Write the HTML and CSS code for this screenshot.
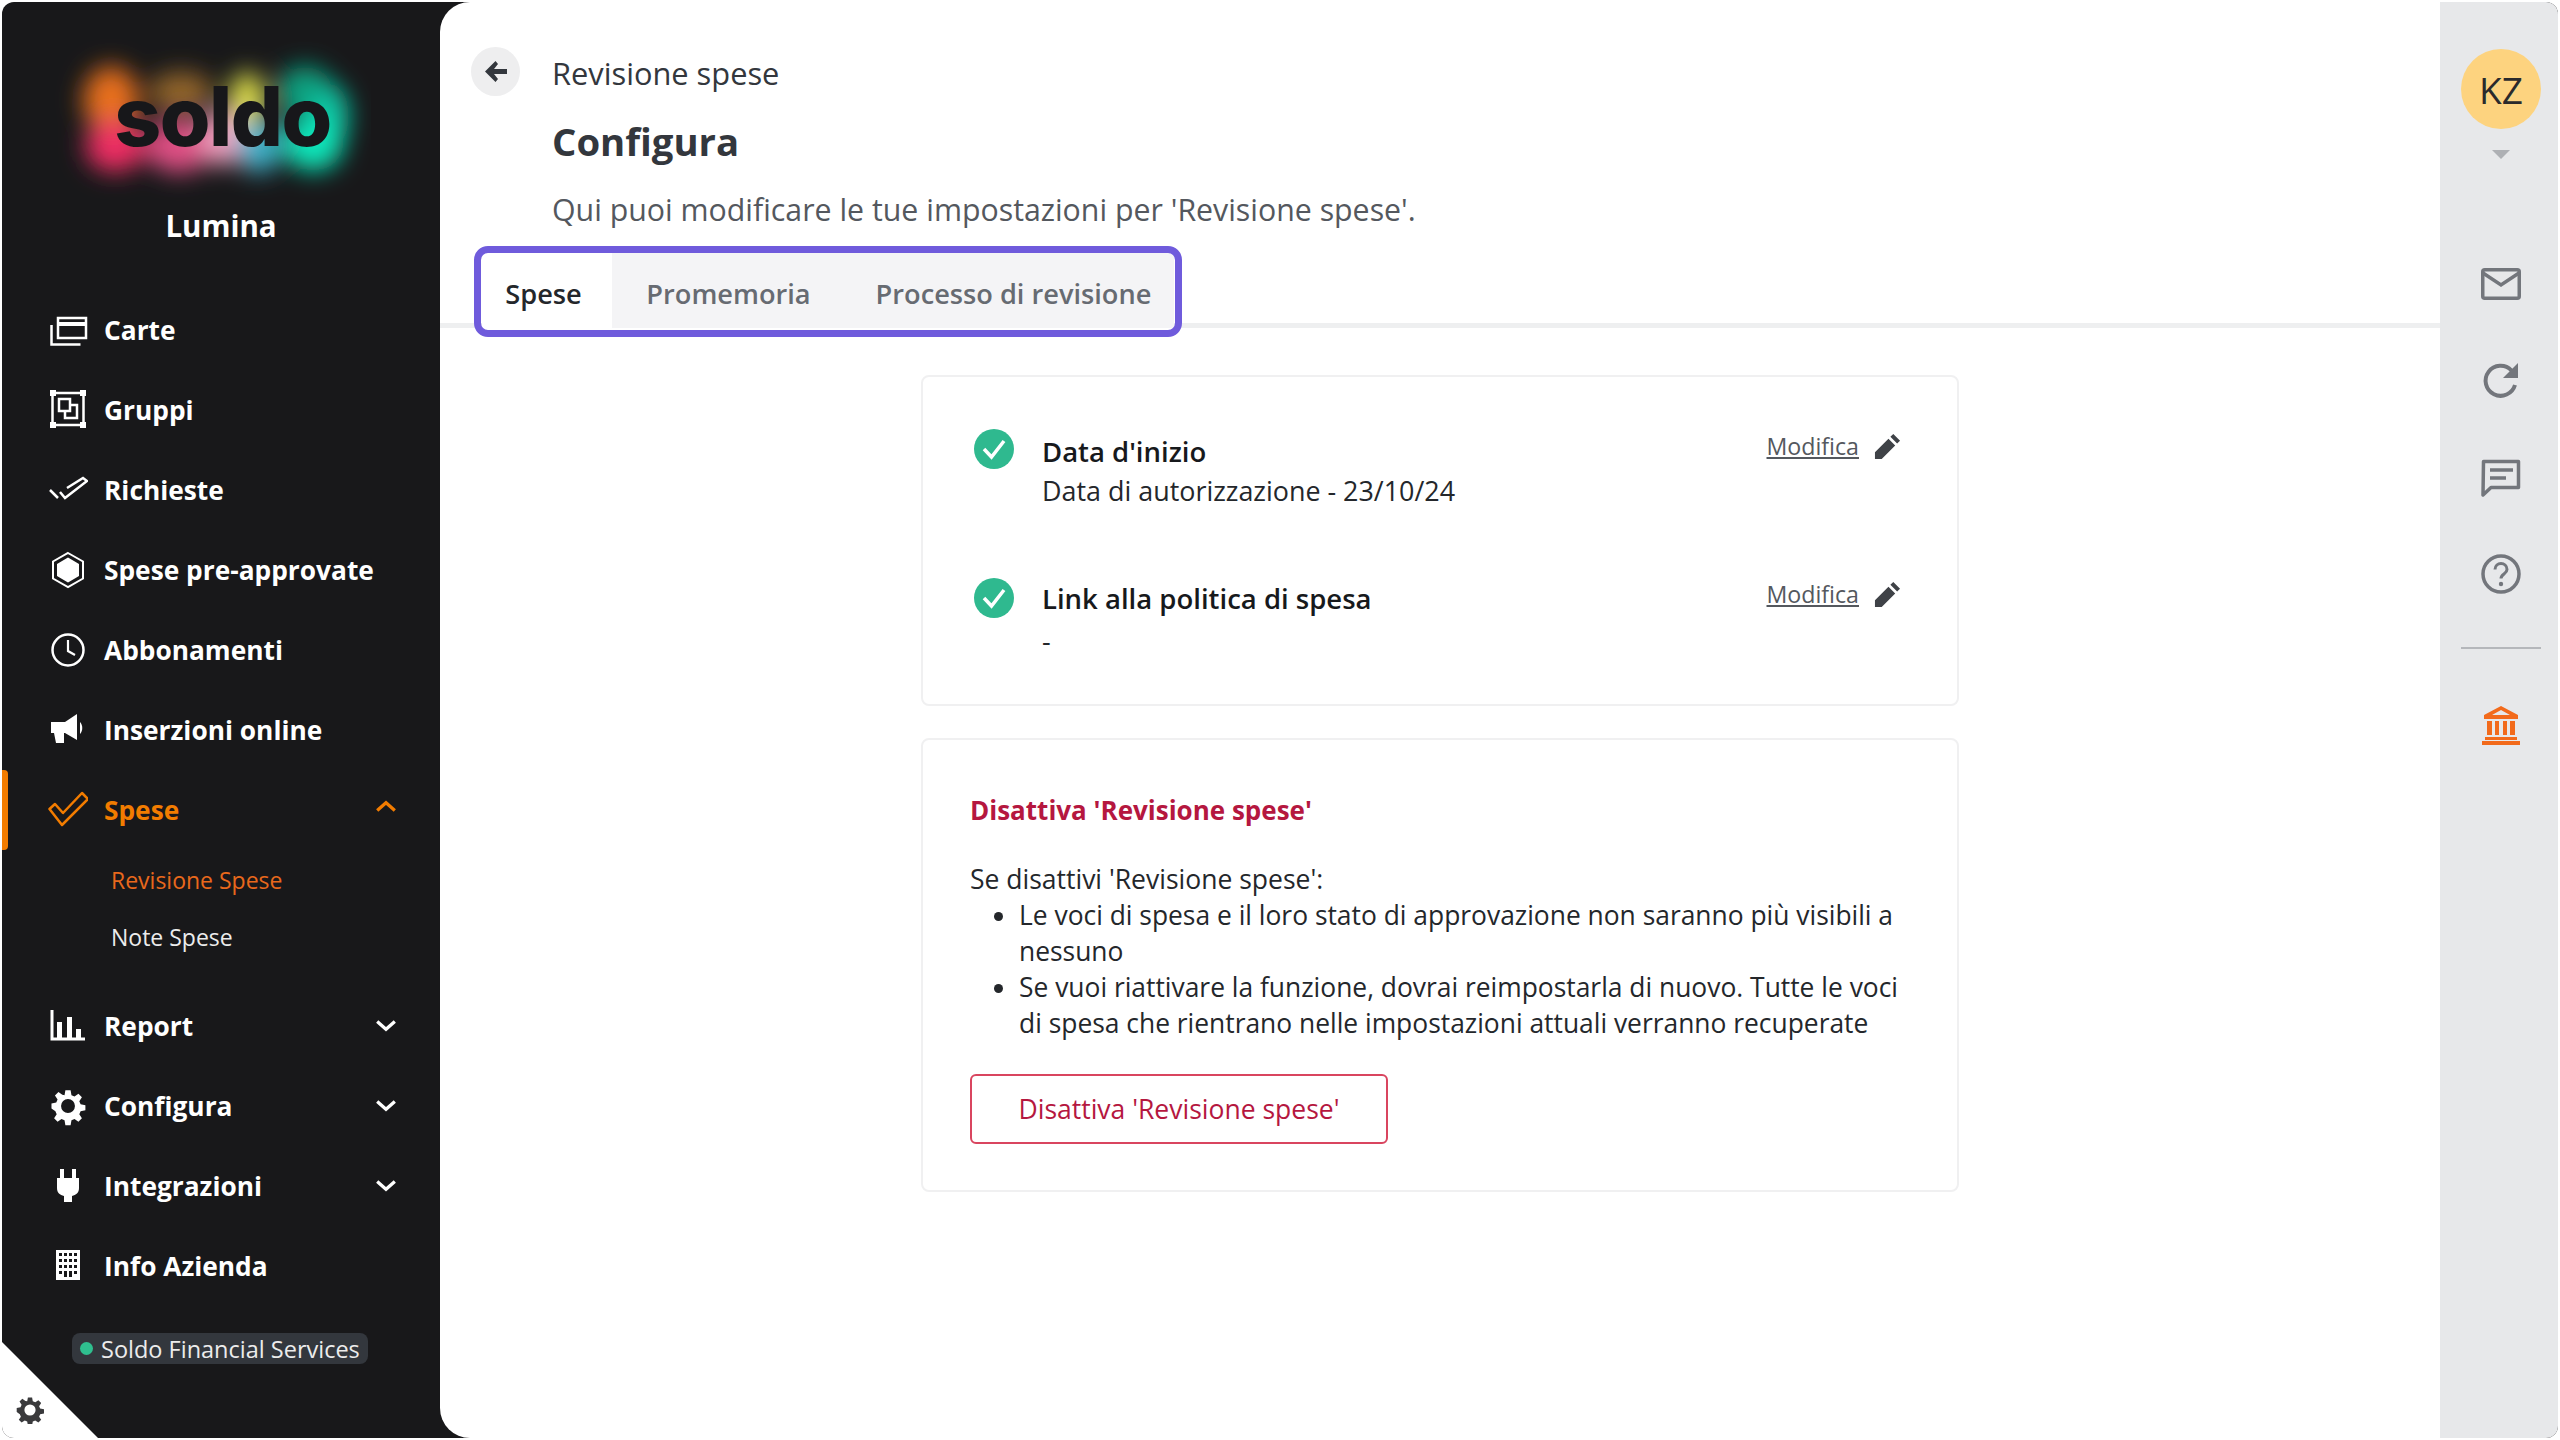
FILE: index.html
```html
<!DOCTYPE html>
<html lang="it">
<head>
<meta charset="utf-8">
<title>Revisione spese</title>
<link rel="stylesheet" href="styles.css">
</head>
<body>
<div class="app">
  <aside class="sidebar">
    <div class="logo">
      <svg class="glow" viewBox="0 0 320 170" aria-hidden="true">
        <defs><filter id="blur" x="-30%" y="-30%" width="160%" height="160%"><feGaussianBlur stdDeviation="12"/></filter></defs>
        <g filter="url(#blur)">
          <ellipse cx="60" cy="62" rx="28" ry="34" fill="#e8701a"/>
          <ellipse cx="64" cy="108" rx="30" ry="26" fill="#ee2f64"/>
          <ellipse cx="130" cy="54" rx="32" ry="20" fill="#94662a"/>
          <ellipse cx="128" cy="108" rx="34" ry="27" fill="#df4f84"/>
          <ellipse cx="196" cy="62" rx="18" ry="28" fill="#e2e24c"/>
          <ellipse cx="172" cy="100" rx="22" ry="28" fill="#f0a0c0"/>
          <ellipse cx="208" cy="108" rx="22" ry="27" fill="#3fb4cc"/>
          <ellipse cx="254" cy="54" rx="28" ry="26" fill="#07a07f"/>
          <ellipse cx="280" cy="78" rx="18" ry="32" fill="#08c6a4"/>
          <ellipse cx="262" cy="106" rx="30" ry="27" fill="#0ce8bc"/>
        </g>
      </svg>
      <span class="logo-word">soldo</span>
    </div>
    <div class="company">Lumina</div>
    <nav class="nav">
      <a class="item"><svg class="ico" viewBox="0 0 40 40"><path d="M10 8h28v20H10z" fill="none" stroke="#fff" stroke-width="2.500"/><path d="M10 12h28v4H10z" fill="#fff"/><path d="M3.500 15v19.500h29" fill="none" stroke="#fff" stroke-width="2.500"/></svg><span>Carte</span></a>
      <a class="item"><svg class="ico" viewBox="0 0 40 40"><path d="M4.500 3h31v32h-31z" fill="none" stroke="#fff" stroke-width="2.500"/><path d="M2 0h6v6H2zM32 0h6v6h-6zM2 32h6v6H2zM32 32h6v6h-6z" fill="#fff"/><path d="M11 9h11v12H11zM23 15h6v13H17v-6" fill="none" stroke="#fff" stroke-width="2.500"/></svg><span>Gruppi</span></a>
      <a class="item"><svg class="ico" viewBox="0 0 40 40"><path d="M2 20l8 8M12 22l5 6 22-17-4-3-16 10" fill="none" stroke="#fff" stroke-width="2.500"/></svg><span>Richieste</span></a>
      <a class="item"><svg class="ico" viewBox="0 0 40 40"><path d="M20 3 35 11.500v17L20 37 5 28.500v-17z" fill="none" stroke="#fff" stroke-width="2"/><path d="M20 7.500 31 14v12l-11 6.500L9 26V14z" fill="#fff"/></svg><span>Spese pre-approvate</span></a>
      <a class="item"><svg class="ico" viewBox="0 0 40 40"><circle cx="20" cy="20" r="15.500" fill="none" stroke="#fff" stroke-width="2.500"/><path d="M20 10v11l7 4" fill="none" stroke="#fff" stroke-width="2.200"/></svg><span>Abbonamenti</span></a>
      <a class="item"><svg class="ico" viewBox="0 0 40 40"><path d="M3 12h14l12-8v26l-12-7h-1v10h-8l-2-10H3z" fill="#fff"/><path d="M32 12c3 3 3 9 0 12z" fill="#fff"/></svg><span>Inserzioni online</span></a>
      <a class="item active"><svg class="ico" viewBox="0 0 40 40"><path d="M1.500 19 7 14l8 9L34 3l6 6-26 26z" fill="none" stroke="#f27c00" stroke-width="2.500" stroke-linejoin="round"/></svg><span>Spese</span><svg class="chev up" viewBox="0 0 20 12"><path d="M2 10 10 3l8 7" fill="none" stroke="#f27c00" stroke-width="3"/></svg></a>
      <div class="sub">
        <a class="sub-item current">Revisione Spese</a>
        <a class="sub-item">Note Spese</a>
      </div>
      <a class="item"><svg class="ico" viewBox="0 0 40 40"><path d="M4 4v29h33" fill="none" stroke="#fff" stroke-width="3"/><path d="M9 16h5v17H9zM19 11h5v22h-5zM28 23h5v10h-5z" fill="#fff"/></svg><span>Report</span><svg class="chev" viewBox="0 0 20 12"><path d="M2 2l8 7 8-7" fill="none" stroke="#fff" stroke-width="3"/></svg></a>
      <a class="item"><svg class="ico" viewBox="-3 -3 46 46"><use href="#gear"/></svg><span>Configura</span><svg class="chev" viewBox="0 0 20 12"><path d="M2 2l8 7 8-7" fill="none" stroke="#fff" stroke-width="3"/></svg></a>
      <a class="item"><svg class="ico" viewBox="0 0 40 40"><path d="M12 3h4v9h-4zM24 3h4v9h-4zM9 12h22v10c0 5-3 7-7 8v6h-8v-6c-4-1-7-3-7-8z" fill="#fff"/></svg><span>Integrazioni</span><svg class="chev" viewBox="0 0 20 12"><path d="M2 2l8 7 8-7" fill="none" stroke="#fff" stroke-width="3"/></svg></a>
      <a class="item"><svg class="ico" viewBox="0 0 40 40"><path fill="#fff" fill-rule="evenodd" d="M8 4h24v30H8zM11 7v3h3V7zM16 7v3h3V7zM21 7v3h3V7zM26 7v3h3V7zM11 13v3h3v-3zM16 13v3h3v-3zM21 13v3h3v-3zM26 13v3h3v-3zM11 19v3h3v-3zM16 19v3h3v-3zM21 19v3h3v-3zM26 19v3h3v-3zM11 25v3h3v-3zM16 25v6h3v-6zM21 25v6h3v-6zM26 25v3h3v-3z"/></svg><span>Info Azienda</span></a>
    </nav>
    <div class="badge"><i class="dot"></i><span>Soldo Financial Services</span></div>
    <div class="corner">
      <svg class="corner-gear" viewBox="0 0 40 40"><use href="#gear-dark"/></svg>
    </div>
  </aside>

  <main class="main">
    <header class="head">
      <div class="crumb">
        <span class="back"><svg viewBox="0 0 22 21"><path d="M10.500 0 0 10.500 10.500 21l2.500-3-4-5h13V8H9l4-5z" fill="#33373d"/></svg></span>
        <span class="crumb-text">Revisione spese</span>
      </div>
      <h1 class="title">Configura</h1>
      <p class="lead">Qui puoi modificare le tue impostazioni per 'Revisione spese'.</p>
      <div class="tabs">
        <a class="tab on tab1">Spese</a>
        <a class="tab tab2">Promemoria</a>
        <a class="tab tab3">Processo di revisione</a>
        <div class="focus"></div>
      </div>
    </header>
    <section class="content">
      <div class="card card-a">
        <div class="row row1">
          <svg class="check" viewBox="0 0 40 40"><circle cx="20" cy="20" r="20" fill="#2fb98f"/><path d="M10 20l7.500 8L30 12" fill="none" stroke="#fff" stroke-width="3.500"/></svg>
          <div class="row-body"><div class="row-title">Data d'inizio</div><div class="row-sub">Data di autorizzazione - 23/10/24</div></div>
          <a class="edit"><u>Modifica</u><svg viewBox="0 0 28 28"><use href="#pencil"/></svg></a>
        </div>
        <div class="row row2">
          <svg class="check" viewBox="0 0 40 40"><circle cx="20" cy="20" r="20" fill="#2fb98f"/><path d="M10 20l7.500 8L30 12" fill="none" stroke="#fff" stroke-width="3.500"/></svg>
          <div class="row-body"><div class="row-title">Link alla politica di spesa</div><div class="row-sub">-</div></div>
          <a class="edit"><u>Modifica</u><svg viewBox="0 0 28 28"><use href="#pencil"/></svg></a>
        </div>
      </div>
      <div class="card card-b">
        <h2 class="danger">Disattiva 'Revisione spese'</h2>
        <p class="intro">Se disattivi 'Revisione spese':</p>
        <ul class="list">
          <li>Le voci di spesa e il loro stato di approvazione non saranno più visibili a nessuno</li>
          <li>Se vuoi riattivare la funzione, dovrai reimpostarla di nuovo. Tutte le voci di spesa che rientrano nelle impostazioni attuali verranno recuperate</li>
        </ul>
        <button class="btn">Disattiva 'Revisione spese'</button>
      </div>
    </section>
  </main>

  <aside class="rail">
    <div class="avatar">KZ</div>
    <div class="caret"></div>
    <svg class="r-ico mail" viewBox="0 0 40 32"><rect x="1.750" y="1.750" width="36.500" height="28.500" rx="2" fill="none" stroke="#73767c" stroke-width="3.500"/><path d="M2 5l18 12L38 5" fill="none" stroke="#73767c" stroke-width="3.500"/></svg>
    <svg class="r-ico refresh" viewBox="0 0 40 40"><path d="M34 24a15 15 0 1 1-3.500-14.500" fill="none" stroke="#73767c" stroke-width="4"/><path d="M37 2v15H22z" fill="#73767c"/></svg>
    <svg class="r-ico chat" viewBox="0 0 40 40"><path d="M2.500 2.500h35v26H10L2 36z" fill="none" stroke="#73767c" stroke-width="3.500" stroke-linejoin="round"/><path d="M9 11h23M9 19h16" stroke="#73767c" stroke-width="3.500"/></svg>
    <svg class="r-ico help" viewBox="0 0 40 40"><circle cx="20" cy="20" r="18" fill="none" stroke="#73767c" stroke-width="3.500"/><path d="M14 15.500c0-8 12-8 12 0 0 4.500-6 4.500-6 9" fill="none" stroke="#73767c" stroke-width="3"/><circle cx="20" cy="30" r="2.200" fill="#73767c"/></svg>
    <div class="rule"></div>
    <svg class="r-ico bank" viewBox="0 0 40 40"><path fill-rule="evenodd" d="M20 0 37 9v4H3V9zM20 4l-9 5h18zM6 15h5v14H6zM14 15h4v14h-4zM22 15h4v14h-4zM29 15h5v14h-5zM4 31h32v3H4zM1 35h38v4H1z" fill="#f26a1b"/></svg>
  </aside>
</div>
<svg class="defs" aria-hidden="true">
  <defs>
    <path id="gear-shape" fill-rule="evenodd" d="M17 2h6l1 5.500 3.500 1.500 4.500-3 4 4-3 4.500 1.500 3.500 5.500 1v6l-5.500 1-1.500 3.500 3 4.500-4 4-4.500-3-3.500 1.500-1 5.500h-6l-1-5.500-3.500-1.500-4.500 3-4-4 3-4.500-1.500-3.500L1 23v-6l5.500-1L8 12.500 5 8l4-4 4.500 3L16 7.500zM20 12a8 8 0 1 0 0 16 8 8 0 0 0 0-16z"/>
    <use id="gear" href="#gear-shape" fill="#fff"/>
    <use id="gear-dark" href="#gear-shape" fill="#3a3a3c"/>
    <path id="pencil" fill="#3f4247" d="M20 1l7 7-3 3-7-7zM15 6l7 7L8 27H1v-7z"/>
  </defs>
</svg>
</body>
</html>
```
FILE: styles.css
```css
* { box-sizing: border-box; }
html, body { margin: 0; height: 100%; background: #fff; }
body { padding: 2px; font-family: "Open Sans", "Noto Sans", sans-serif; color: #24272b; overflow: hidden; }
.defs { position: absolute; width: 0; height: 0; }
a { text-decoration: none; color: inherit; }
h1, h2, p, ul { margin: 0; }

.app { display: flex; height: 1436px; background: #18181a; border-radius: 12px; overflow: hidden; }

.sidebar { position: relative; width: 438px; flex: none; color: #fff; display: flex; flex-direction: column; }
.logo { position: relative; height: 190px; display: flex; justify-content: center; }
.glow { position: absolute; left: 49px; top: 36px; width: 320px; height: 170px; }
.logo-word { position: relative; margin-top: 65px; margin-left: 3px; font-family: Inter, sans-serif; font-weight: 800; font-size: 82px; line-height: 100px; letter-spacing: -1.500px; color: #17171a; height: 100px; }
.company { text-align: center; font-size: 29.500px; font-weight: 700; line-height: 40px; margin-top: 14px; }
.nav { margin-top: 44px; display: flex; flex-direction: column; }
.item { height: 80px; display: flex; align-items: center; position: relative; padding-left: 46px; font-size: 26.300px; font-weight: 700; color: #fff; }
.ico { width: 40px; height: 40px; flex: none; margin-right: 16px; }
.chev { position: absolute; left: 373px; width: 22px; height: 14px; }
.chev.up { top: 29px; }
.active { color: #f27c00; }
.active::before { content: ""; position: absolute; left: 0; top: 0; width: 6px; height: 80px; background: #f27c00; border-radius: 0 4px 4px 0; }
.sub { height: 136px; padding-top: 2px; display: flex; flex-direction: column; }
.sub-item { height: 57px; line-height: 57px; padding-left: 109px; font-size: 23px; color: #ececec; }
.sub-item.current { color: #e8681c; }
.badge { align-self: flex-start; margin: 27px 0 0 70px; height: 31px; width: 296px; background: #33373d; border-radius: 8px; display: flex; align-items: center; padding-left: 8px; font-size: 23.500px; color: #ececec; white-space: nowrap; }
.dot { width: 13px; height: 13px; border-radius: 50%; background: #2fbf8f; margin-right: 8px; flex: none; }
.corner { position: absolute; left: 0; bottom: 0; width: 96px; height: 96px; background: #fff; clip-path: polygon(0 0, 100% 100%, 0 100%); }
.corner-gear { position: absolute; left: 14px; top: 54px; width: 28px; height: 28px; }

.main { flex: 1; background: #fff; border-radius: 30px 0 0 30px; display: flex; flex-direction: column; min-width: 0; }
.head { height: 326px; border-bottom: 5px solid #eeeff0; padding-left: 112px; position: relative; flex: none; }
.crumb { display: flex; align-items: center; height: 50px; margin: 44px 0 0 -81px; }
.back { width: 49px; height: 49px; border-radius: 50%; background: #eeeeef; display: flex; align-items: center; justify-content: center; margin-right: 32px; flex: none; }
.back svg { width: 22px; height: 21px; }
.crumb-text { font-size: 30.800px; line-height: 50px; color: #33373d; padding-top: 3px; }
.title { font-size: 38.300px; font-weight: 700; line-height: 50px; margin-top: 20px; color: #33373d; }
.lead { font-size: 30.300px; line-height: 40px; margin-top: 24px; color: #54585e; }
.tabs { position: absolute; left: 42px; top: 251px; display: flex; height: 75px; background: #f4f4f6; }
.tab { display: flex; align-items: center; justify-content: center; padding-top: 6px; font-size: 27.200px; font-weight: 600; color: #676b72; }
.tab.on { background: #fff; color: #24272b; }
.tab1 { width: 130px; padding-right: 7px; }
.tab2 { width: 228px; padding-left: 5px; }
.tab3 { width: 334px; padding-left: 13px; }
.focus { position: absolute; left: -8px; top: -7px; right: -8px; bottom: -9px; border: 7px solid #6f5bdc; border-radius: 14px; pointer-events: none; }

.content { display: flex; flex-direction: column; align-items: center; gap: 32px; padding-top: 47px; }
.card { width: 1038px; background: #fff; border: 2px solid #f0f0f1; border-radius: 8px; }
.card-a { height: 331px; padding: 52px 56px 0 51px; display: flex; flex-direction: column; gap: 107px; }
.row { display: flex; height: 42px; }
.check { width: 40px; height: 40px; flex: none; margin-right: 28px; }
.row-body { flex: 1; padding-top: 3px; }
.row2 .row-body { padding-top: 1px; }
.row-title { font-size: 27.500px; font-weight: 600; line-height: 40px; color: #17191c; }
.row-sub { font-size: 26.900px; line-height: 38px; color: #24272b; }
.row2 .row-sub { margin-top: 3px; }
.edit { display: flex; align-items: flex-start; gap: 15px; font-size: 23.200px; line-height: 36px; color: #54585e; margin-top: -1px; }
.row2 .edit { margin-top: -2px; }
.edit svg { width: 27px; height: 27px; margin-top: 5px; }

.card-b { height: 454px; padding: 50px 43px 0 47px; }
.danger { font-size: 26px; font-weight: 700; line-height: 40px; color: #b5173f; }
.intro { font-size: 26.500px; line-height: 36px; margin-top: 31px; }
.list { padding-left: 49px; font-size: 26.400px; line-height: 36px; }
.btn { display: block; margin-top: 33px; width: 418px; height: 70px; background: #fff; border: 2px solid #d9455f; border-radius: 6px; color: #b5173f; font: 400 26.500px "Open Sans", sans-serif; }

.rail { width: 118px; flex: none; background: #e7e8ea; display: flex; flex-direction: column; align-items: center; padding-left: 4px; }
.avatar { margin-top: 47px; width: 80px; height: 80px; border-radius: 50%; background: #fdd37f; display: flex; align-items: center; justify-content: center; font: 500 37px "Open Sans", sans-serif; color: #2a2a2c; flex: none; }
.caret { margin-top: 21px; border-style: solid; border-width: 9px 9px 0; border-color: #aeb0b4 transparent transparent; }
.r-ico { flex: none; width: 40px; }
.mail { height: 32px; margin-top: 109px; }
.refresh { height: 40px; margin-top: 61px; }
.chat { height: 40px; margin-top: 58px; }
.help { height: 40px; margin-top: 55px; }
.rule { width: 80px; height: 2px; background: #b5b7bb; margin-top: 53px; flex: none; }
.bank { height: 40px; margin-top: 57px; }
```
